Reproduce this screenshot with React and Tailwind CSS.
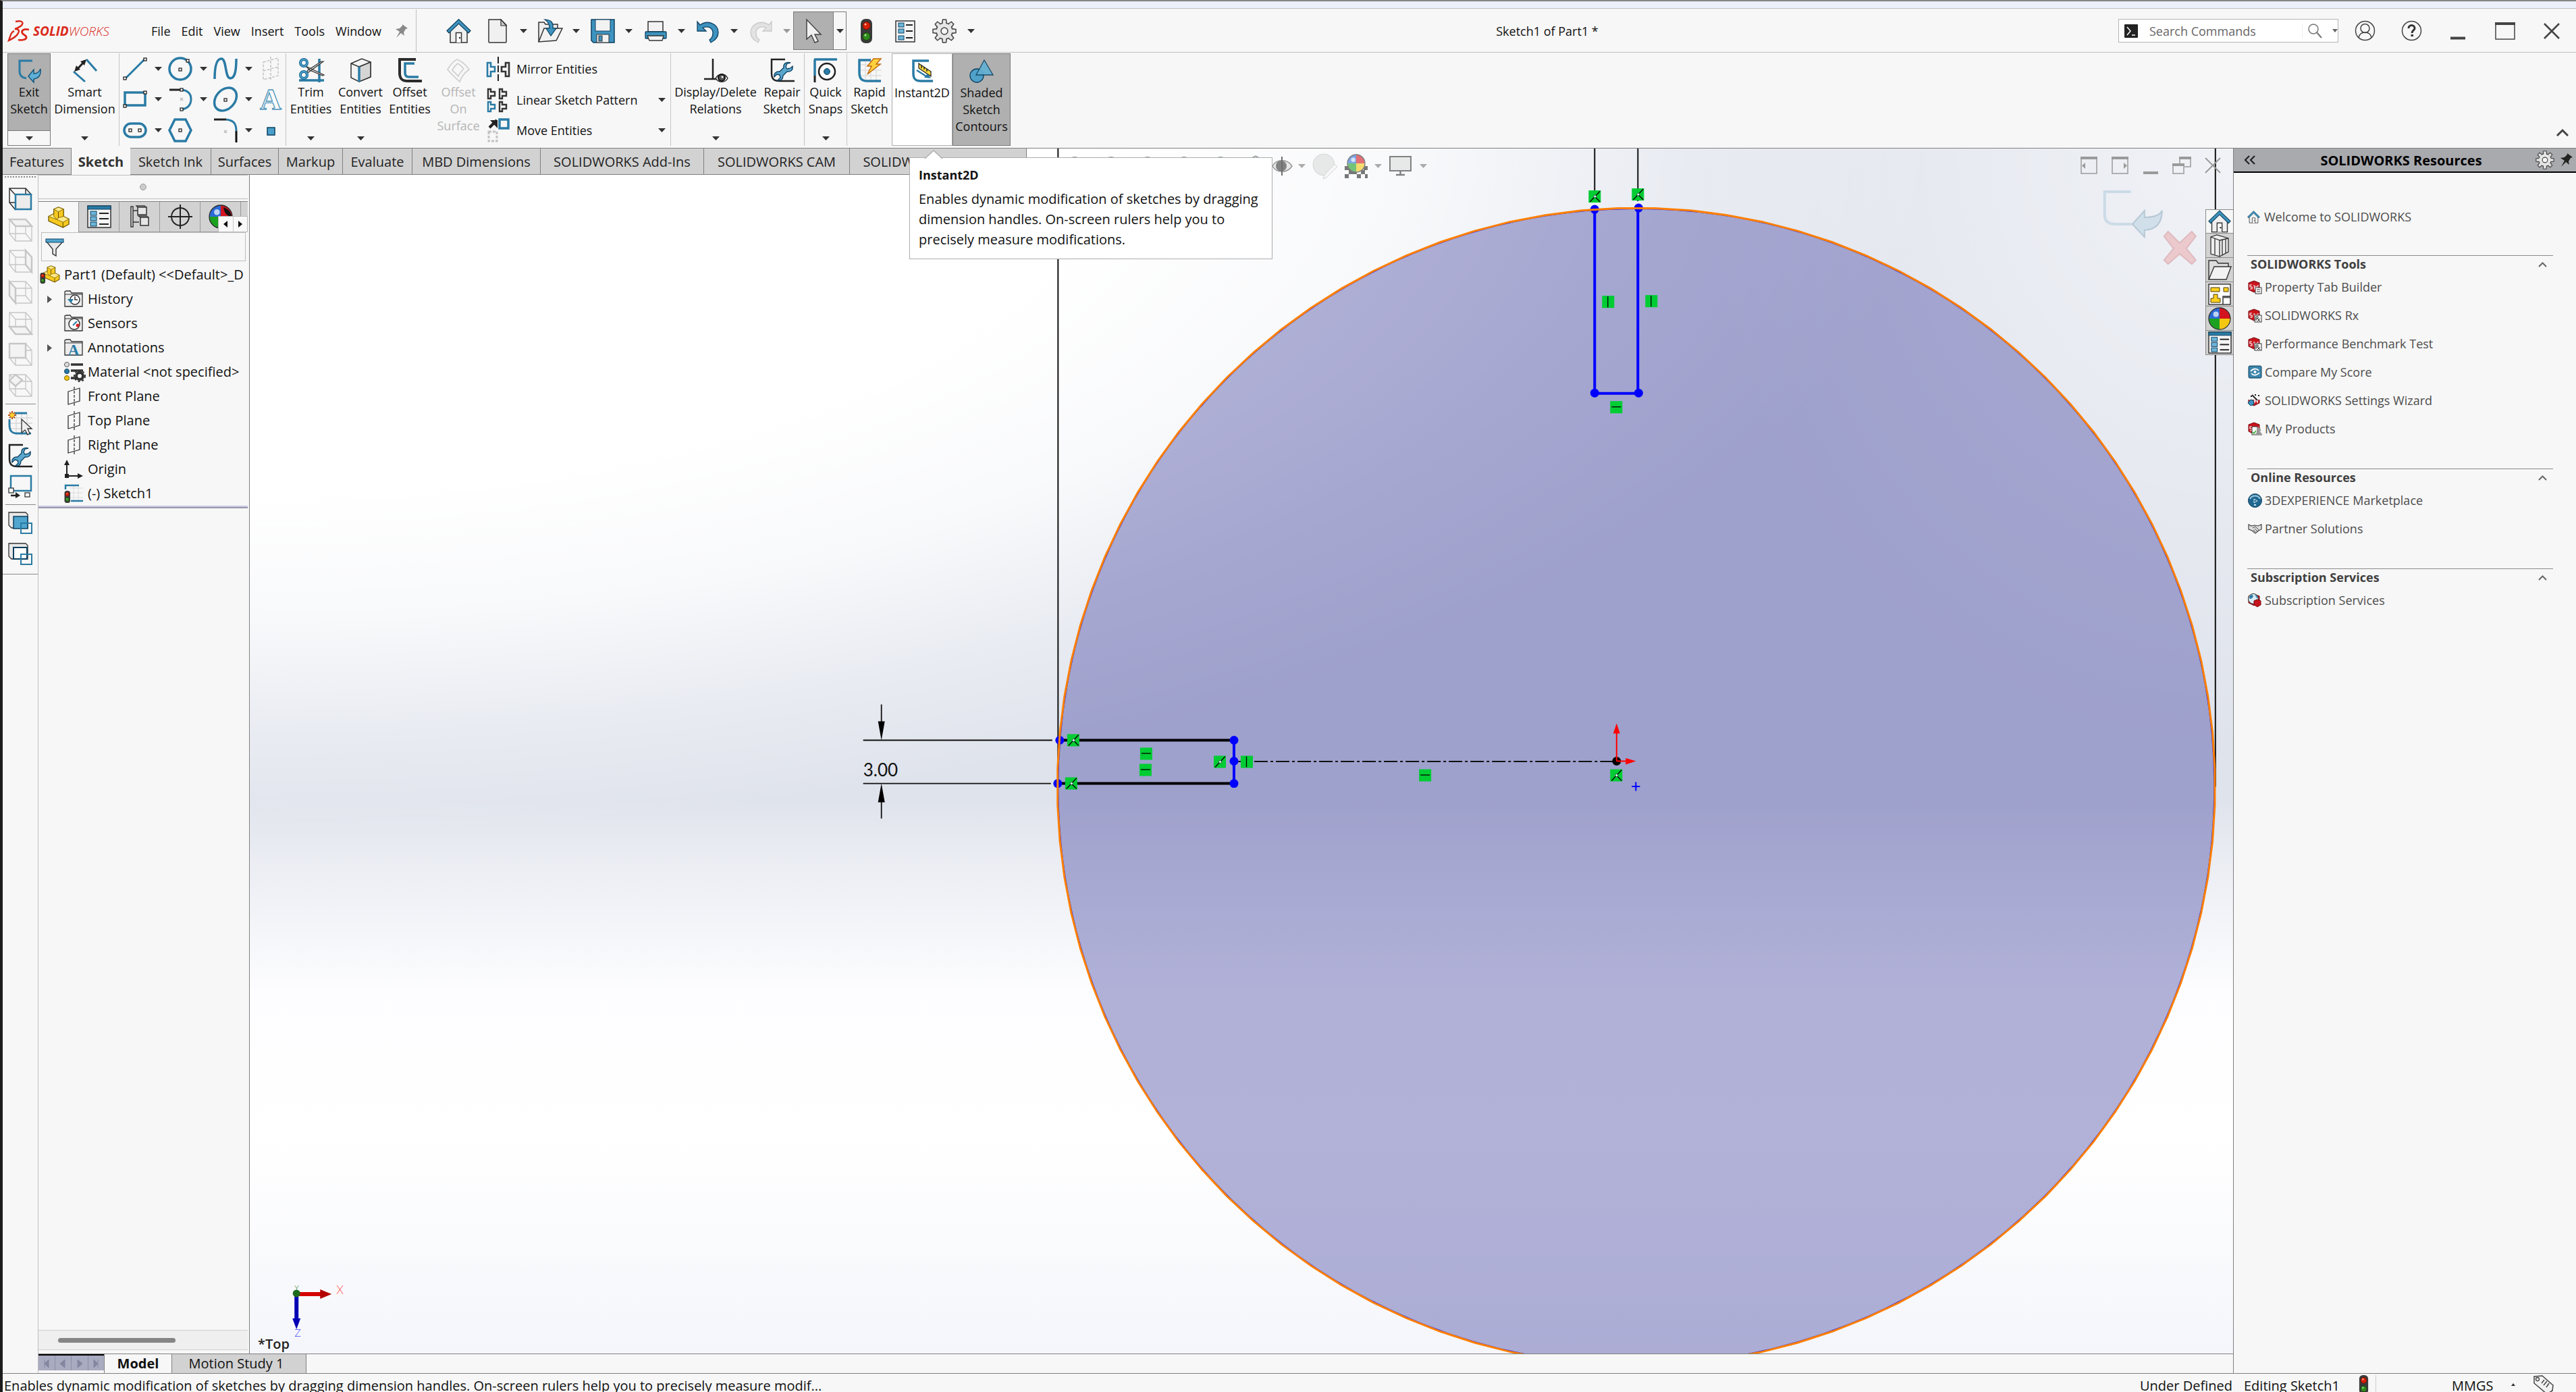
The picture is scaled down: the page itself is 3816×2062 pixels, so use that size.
const BLUE = "#2a7ba5";
const DARK = "#333333";

function Ico({ w = 36, h = 36, vw, vh, className = "", children }) {
  return (
    <svg
      width={w}
      height={h}
      viewBox={`0 0 ${vw || w} ${vh || h}`}
      fill="none"
      className={`shrink-0 overflow-visible ${className}`}
      aria-hidden="true"
    >
      {children}
    </svg>
  );
}

function Caret({ color = DARK }) {
  return (
    <Ico w={11} h={6}>
      <path d="M0 0h11L5.500 6z" fill={color} />
    </Ico>
  );
}

function Handle({ x, y }) {
  return <rect x={x - 2} y={y - 2} width="4" height="4" fill="#fff" stroke="#222" strokeWidth="1.300" />;
}

function TrafficShape() {
  return (
    <>
      <rect x="1" y="0" width="17" height="36" rx="7" fill="#3a3a3a" />
      <circle cx="9.500" cy="10" r="5.500" fill="#d81e05" stroke="#7a0e00" />
      <circle cx="8" cy="8" r="1.500" fill="#ffb3a5" />
      <circle cx="9.500" cy="26" r="5.500" fill="#2f8a1c" stroke="#134a08" />
      <circle cx="8" cy="24" r="1.500" fill="#a9e59b" />
    </>
  );
}

function HomeShape() {
  return (
    <>
      <path d="M6 17v18h25V17L18.500 5z" fill="#f0f0f0" stroke="#333" strokeWidth="1.500" />
      <path d="M14.500 35V20.500h8V35" fill="#fff" stroke="#333" strokeWidth="1.500" />
      <circle cx="20" cy="28" r="1.300" fill="#333" />
      <path d="M1 17.500L18.500 0.500L36 17.500l-3 3.500L18.500 7L4 21z" fill="#3f93bd" stroke="#0c3f5c" strokeWidth="1.200" />
    </>
  );
}

function GearShape({ fill = "#e6e6e6" }) {
  return (
    <>
      {[0, 45, 90, 135, 180, 225, 270, 315].map((a) => (
        <path key={a} d="M14.500 7l1-6h5l1 6" transform={`rotate(${a} 18 18)`} fill={fill} stroke="#444" strokeWidth="1.500" />
      ))}
      <circle cx="18" cy="18" r="12" fill={fill} stroke="#444" strokeWidth="1.500" />
      {[0, 45, 90, 135, 180, 225, 270, 315].map((a) => (
        <path key={a} d="M15.500 8l.5-3h4l.5 3z" transform={`rotate(${a} 18 18)`} fill={fill} />
      ))}
      <circle cx="18" cy="18" r="5" fill="#f7f7f7" stroke="#444" strokeWidth="1.500" />
    </>
  );
}

function WrenchShape() {
  return (
    <path
      d="M30 7l-5 1-2 5 2 3 5-1 3-3c1 6-3 9-8 8l-6 6c0 5-3 8-8 7l4-4-1-4-4-1-4 4c-1-5 3-9 8-8l6-6c-1-5 3-9 10-7z"
      fill="#5aa7ce"
      stroke="#0c4060"
      strokeWidth="1.300"
    />
  );
}

function PinShape({ fill }) {
  return <path d="M11 0l8 6-3 1-3 5 1 5-5-4-7 7 5-9-6-4 6-1 4-4z" fill={fill} />;
}

function SphereShape({ x = 18, y = 18, r = 17 }) {
  return (
    <>
      <circle cx={x} cy={y} r={r} fill="#2b6bd6" />
      <path d={`M${x} ${y}V${y - r}A${r} ${r} 0 0 1 ${x + r} ${y}z`} fill="#d3141f" />
      <path d={`M${x} ${y}H${x + r}A${r} ${r} 0 0 1 ${x} ${y + r}z`} fill="#f4c812" />
      <path d={`M${x} ${y}V${y + r}A${r} ${r} 0 0 1 ${x - r} ${y}z`} fill="#1da121" />
      <circle cx={x} cy={y} r={r} stroke="#2a2a2a" strokeWidth="1.300" />
      <circle cx={x - r / 3} cy={y - r / 2.5} r={r / 4} fill="#fff" opacity=".7" />
    </>
  );
}

function ListShape() {
  return (
    <>
      <rect x="1" y="1" width="34" height="32" fill="#f4f4f4" stroke="#333" strokeWidth="1.500" />
      <rect x="1" y="1" width="34" height="5" fill={BLUE} stroke="#0c4060" />
      {[9, 17, 25].map((y) => (
        <g key={y}>
          <rect x="5" y={y} width="9" height="6" fill="#6db6da" stroke="#0c4060" />
          <path d={`M18 ${y + 3}h14`} stroke="#222" strokeWidth="2" />
        </g>
      ))}
    </>
  );
}

function PartShape() {
  return (
    <>
      <path d="M1 15l8-4V4l7-3 8 3v11l8 4v8l-9 5L1 22z" fill="#f6c921" stroke="#6b5200" strokeWidth="1.300" />
      <path d="M9 4l7-3 8 3-8 4zM16 17l8-2 8 4-9 5-9-4zM1 15l8-4v4l5 5z" fill="#fce98c" stroke="#8a6c00" />
      <path d="M16 8v9M23 24v8" stroke="#6b5200" strokeWidth="1.200" />
    </>
  );
}

/* Ribbon icons, all on a 36 x 36 box */
const icons = {
  exit: (
    <>
      <path d="M23 3H4v16c0 6 3 9 10 10" stroke={BLUE} strokeWidth="3" />
      <path d="M17 26l8-10v6c5 0 8-2 10-7 1 9-3 14-10 15v5z" fill="#5fb0d6" stroke="#0c4f75" strokeWidth="1.300" />
    </>
  ),
  dim: (
    <>
      <path d="M20 2l15 17M1 20l17 15" stroke={BLUE} strokeWidth="3" />
      <path d="M5 18L18 4" stroke="#222" strokeWidth="3" />
      <path d="M2 20l3-9 6 6zM20 2l-3 9-6-6z" fill="#222" />
    </>
  ),
  line: (
    <>
      <path d="M3 33L32 4" stroke={BLUE} strokeWidth="3" />
      <Handle x={3} y={32} />
      <Handle x={33} y={4} />
    </>
  ),
  circle: (
    <>
      <circle cx="18" cy="18" r="16" stroke={BLUE} strokeWidth="3.500" />
      <Handle x={18} y={19} />
      <Handle x={29} y={6} />
    </>
  ),
  spline: <path d="M2 33C2 12 6 3 12 3c8 0 5 29 13 29 6 0 9-8 9-29" stroke={BLUE} strokeWidth="3.500" />,
  plane: <path d="M7 8l22-6v26L7 34zM18 0v36M7 21l22-6" stroke="#c4c4c4" strokeWidth="1.500" strokeDasharray="4 2" />,
  rect: (
    <>
      <rect x="3" y="8" width="30" height="19" stroke={BLUE} strokeWidth="3.500" />
      <Handle x={3} y={28} />
      <Handle x={33} y={8} />
    </>
  ),
  arc: (
    <>
      <path d="M2 4h18" stroke="#222" strokeWidth="3" />
      <path d="M20 4c9 1 14 6 14 14s-5 14-14 15" stroke={BLUE} strokeWidth="3" />
      <path d="M18 16l4 4m0-4l-4 4" stroke="#bbb" strokeWidth="1.500" />
      <Handle x={20} y={4} />
      <Handle x={20} y={33} />
    </>
  ),
  ellipse: (
    <>
      <ellipse cx="18" cy="18" rx="19" ry="14" transform="rotate(-48 18 18)" stroke={BLUE} strokeWidth="3.500" />
      <Handle x={18} y={19} />
    </>
  ),
  text: (
    <text x="18" y="33" textAnchor="middle" fontFamily="Liberation Serif, serif" fontSize="44" fontWeight="bold" fill="#fdfdfd" stroke="#4c94ba" strokeWidth="1.300">
      A
    </text>
  ),
  slot: (
    <>
      <rect x="2" y="8" width="32" height="20" rx="10" stroke={BLUE} strokeWidth="3.500" />
      <Handle x={11} y={18} />
      <Handle x={25} y={18} />
    </>
  ),
  hex: (
    <>
      <path d="M10 2h16l8 16-8 16H10L2 18z" stroke={BLUE} strokeWidth="3.500" />
      <Handle x={18} y={18} />
    </>
  ),
  fillet: (
    <>
      <path d="M1 2h18" stroke="#222" strokeWidth="3" />
      <path d="M19 2c11 1 15 6 15 17" stroke={BLUE} strokeWidth="3" />
      <path d="M34 19v17" stroke="#111" strokeWidth="3" />
      <path d="M16 18l4 4m0-4l-4 4" stroke="#bbb" strokeWidth="1.500" />
    </>
  ),
  point: <rect x="13" y="14" width="11" height="11" fill="#4aa0ca" stroke="#0c4060" strokeWidth="1.500" />,
  trim: (
    <>
      <path d="M30 1v35M0 33h37" stroke={BLUE} strokeWidth="3.500" />
      <path d="M10 12l27 13-2 1L16 18zM10 24L36 5l-3 0-20 13z" fill="#ddd" stroke="#333" strokeWidth="1.200" />
      <circle cx="7" cy="7" r="5" stroke="#12608c" strokeWidth="4" />
      <circle cx="7" cy="25" r="5" stroke="#12608c" strokeWidth="4" />
      <circle cx="7" cy="7" r="5" stroke="#4fa5ce" strokeWidth="2" />
      <circle cx="7" cy="25" r="5" stroke="#4fa5ce" strokeWidth="2" />
    </>
  ),
  convert: (
    <>
      <path d="M4 8L20 1l13 5v22L16 35 4 29z" fill="#f3f3f3" stroke="#333" strokeWidth="1.500" />
      <path d="M4 8l12 5 17-7" stroke="#333" strokeWidth="1.500" />
      <path d="M16 13l17-7v22l-17 7z" fill="#d5d5d5" stroke="#333" strokeWidth="1.500" />
      <path d="M16 13v22" stroke={BLUE} strokeWidth="3.500" />
    </>
  ),
  offset: (
    <>
      <path d="M27 2H3v20c0 9 4 12 12 12h21" stroke="#2b2b2b" strokeWidth="4" />
      <path d="M25 8H11v14c0 4 2 6 6 6h14" stroke={BLUE} strokeWidth="3.500" />
    </>
  ),
  surface: <path d="M16 2c8 3 13 8 18 15-6 4-11 9-14 18C12 28 6 22 2 17 5 12 9 5 16 2zM17 8c-4 3-6 6-8 10 4 4 6 6 9 9 2-5 5-8 8-11-3-4-5-6-9-8z" stroke="#cfcfcf" strokeWidth="1.700" />,
  mirror: (
    <>
      <path d="M18 0v36" stroke="#222" strokeWidth="2" strokeDasharray="10 3" />
      <path d="M2 9h5v6h6v7H7v7H2z" stroke={BLUE} strokeWidth="2.600" />
      <path d="M34 9h-5v6h-6v7h6v7h5z" stroke="#333" strokeWidth="2.600" />
    </>
  ),
  pattern: (
    <>
      <path d="M3 2h4v4h6v6H7v4H3zM20 2h4v4h6v6h-6v4h-4zM20 21h4v4h6v6h-6v4h-4z" stroke="#333" strokeWidth="2.400" />
      <path d="M3 21h4v4h6v6H7v4H3z" stroke={BLUE} strokeWidth="2.400" />
    </>
  ),
  move: (
    <>
      <path d="M5 14l11-11" stroke="#222" strokeWidth="4" />
      <path d="M6 3h11v12z" fill="#222" />
      <rect x="20" y="2" width="13" height="13" stroke={BLUE} strokeWidth="3.500" />
      <rect x="4" y="20" width="12" height="14" stroke="#c4c4c4" strokeWidth="3" strokeDasharray="4 2" />
    </>
  ),
  relations: (
    <>
      <path d="M14 1v30M1 31h20" stroke="#222" strokeWidth="2.500" />
      <path d="M18 30c5-8 14-8 18 0-4 7-13 7-18 0z" fill="#fff" stroke="#333" strokeWidth="1.500" />
      <circle cx="27" cy="29" r="5" fill="#555" stroke="#111" strokeWidth="2" />
      <circle cx="28" cy="28" r="1.500" fill="#fff" />
    </>
  ),
  repair: (
    <>
      <path d="M22 2H2v20c0 9 3 12 12 12h22" stroke="#222" strokeWidth="2.500" />
      <WrenchShape />
    </>
  ),
  snaps: (
    <>
      <path d="M1 2h34M2 2v24" stroke={BLUE} strokeWidth="3.500" />
      <path d="M2 26v10" stroke="#222" strokeWidth="3" />
      <circle cx="20" cy="20" r="12" fill="#fff" stroke="#222" strokeWidth="2.500" />
      <circle cx="20" cy="20" r="4.500" fill={BLUE} stroke="#0c4060" />
    </>
  ),
  rapid: (
    <>
      <path d="M4 10h32M4 18h32M4 26h32M12 4v32M20 4v32M28 4v32" stroke="#dedede" strokeWidth="1.300" />
      <path d="M20 3H3v18c0 9 3 13 12 13h20" stroke={BLUE} strokeWidth="3.500" />
      <path d="M24 1h11l-7 8h6L15 24l6-12h-6z" fill="#ffd23e" stroke="#c26a12" strokeWidth="1.500" />
    </>
  ),
  instant: (
    <>
      <path d="M28 3H5v19c0 8 3 11 11 11h18" stroke={BLUE} strokeWidth="3.500" />
      <path d="M13 7l18 12v7L13 14z" fill="#ffd93b" stroke="#222" strokeWidth="1.300" />
      <path d="M17 10v4m4-2v4m4-1v4" stroke="#222" strokeWidth="1.500" />
      <path d="M10 17l14 9" stroke={BLUE} strokeWidth="2.500" />
      <path d="M31 29l-10-1 5-6z" fill={BLUE} />
    </>
  ),
  shaded: (
    <>
      <circle cx="11" cy="25" r="10" fill="#4fa1c9" stroke="#0c4060" strokeWidth="1.300" />
      <path d="M22 2l13 22H10z" fill="#62b0d4" stroke="#0c4060" strokeWidth="1.300" opacity=".9" />
    </>
  ),
  home: <HomeShape />,
  doc: (
    <>
      <path d="M5 1h18l8 8v25a1 1 0 0 1-1 1H6a1 1 0 0 1-1-1z" fill="#f0f0f0" stroke="#333" strokeWidth="1.500" />
      <path d="M23 1v9h8z" fill="#ccc" stroke="#333" strokeWidth="1.200" />
    </>
  ),
  open: (
    <>
      <path d="M1 34V5h8l2 3h18v6" fill="#ededed" stroke="#333" strokeWidth="1.500" />
      <path d="M1 34l8-20h27l-9 18z" fill="#f2f2f2" stroke="#333" strokeWidth="1.500" />
      <path d="M10 1c10 0 13 5 12 13h5l-8 11-7-11h5c0-6-2-10-7-13z" fill="#3e93bf" stroke="#0c4060" strokeWidth="1.200" />
    </>
  ),
  save: (
    <>
      <path d="M1 1h34v34H4l-3-3z" fill="#3e93bf" stroke="#0c4060" strokeWidth="1.500" />
      <rect x="7" y="1" width="22" height="17" fill="#f2f2f2" stroke="#0c4060" />
      <rect x="9" y="23" width="18" height="12" fill="#f2f2f2" stroke="#333" />
      <rect x="12" y="25" width="5" height="8" fill="#3e93bf" stroke="#333" />
    </>
  ),
  print: (
    <>
      <rect x="7" y="4" width="22" height="15" fill="#f2f2f2" stroke="#333" strokeWidth="1.500" />
      <rect x="3" y="19" width="31" height="10" rx="1" fill="#3e93bf" stroke="#0c4060" strokeWidth="1.300" />
      <path d="M6 25h24l-2 7H9z" fill="#f2f2f2" stroke="#333" strokeWidth="1.300" />
    </>
  ),
  undo: <path d="M2 4v14h13l-5-5c8-3 15 0 15 8 0 4-2 8-5 10l2 4c6-3 11-8 11-15C33 7 17 1 6 9z" fill="#3e93bf" stroke="#0c4060" strokeWidth="1.300" />,
  redo: <path d="M34 4v14H21l5-5c-8-3-15 0-15 8 0 4 2 8 5 10l-2 4C8 32 3 27 3 20 3 7 19 1 30 9z" fill="#e2e2e2" stroke="#c9c9c9" strokeWidth="1.300" />,
  cursor: <path d="M8 1v29l7-6 5 11 5-2-5-10h9z" fill="#f0f0f0" stroke="#444" strokeWidth="1.500" />,
  gear: <GearShape />,
  props: (
    <>
      <rect x="4" y="3" width="28" height="31" fill="#f4f4f4" stroke="#333" strokeWidth="1.500" />
      {[6, 15, 25].map((y) => (
        <g key={y}>
          <rect x="8" y={y} width="8" height="6" fill="#6db6da" stroke="#0c4060" />
          <path d={`M19 ${y + 3}h10`} stroke="#222" strokeWidth="2" />
        </g>
      ))}
    </>
  ),
};

function Logo() {
  return (
    <div className="flex w-[212px] items-center gap-1 pl-2 text-[#da291c]">
      <Ico w={33} h={32} vw={33} vh={32}>
        <path d="M11 2c7-2 12 0 10 4-1 3-6 5-11 7 6 0 7 2 5 6-2 5-8 8-14 11 3-9 4-13 8-14" stroke="#da291c" strokeWidth="2.400" />
        <path d="M31 14c-7-2-12 1-10 5 1 3 7 3 6 7-1 3-7 4-12 3" stroke="#da291c" strokeWidth="2.800" />
      </Ico>
      <span className="text-[19px] leading-6 italic">
        <b>SOLID</b>
        <span className="font-light">WORKS</span>
      </span>
    </div>
  );
}

function QuickTool({ icon, off }) {
  return (
    <>
      <button className="flex w-[39px] justify-center">
        <Ico>{icons[icon]}</Ico>
      </button>
      <button className={off ? "flex w-[29px] justify-end pr-1" : "flex w-[39px] justify-center"}>
        <Caret color={off ? "#999" : DARK} />
      </button>
    </>
  );
}

function TitleBar() {
  return (
    <header className="flex h-[66px] shrink-0 items-center border-y border-[#bfbfbf] pt-px">
      <Logo />
      <nav className="flex w-[400px] items-center gap-4 pl-2 text-lg">
        {["File", "Edit", "View", "Insert", "Tools", "Window"].map((m) => (
          <button key={m}>{m}</button>
        ))}
        <Ico w={20} h={20} className="ml-1">
          <PinShape fill="#8a8a8a" />
        </Ico>
      </nav>
      <div className="flex h-full items-center border-l border-[#bfbfbf] pl-[44px]">
        <button className="mr-[20px]">
          <Ico>{icons.home}</Ico>
        </button>
        <QuickTool icon="doc" />
        <QuickTool icon="open" />
        <QuickTool icon="save" />
        <QuickTool icon="print" />
        <QuickTool icon="undo" />
        <QuickTool icon="redo" off />
        <div className="flex h-[57px] border border-[#7a7a7a]">
          <button className="flex w-[58px] items-center justify-center bg-[#b0b0b0]">
            <Ico>{icons.cursor}</Ico>
          </button>
          <button className="flex w-[19px] items-center justify-center border-l border-[#7a7a7a]">
            <Caret />
          </button>
        </div>
        <div className="flex w-[192px] items-center gap-[30px] pl-[20px]">
          <button>
            <Ico w={19} h={36}>
              <TrafficShape />
            </Ico>
          </button>
          <button>
            <Ico>{icons.props}</Ico>
          </button>
          <button className="-ml-2 flex items-center gap-4">
            <Ico>{icons.gear}</Ico>
            <Caret />
          </button>
        </div>
      </div>
      <h1 className="flex-1 text-center text-lg">Sketch1 of Part1 *</h1>
      <div className="flex items-center pr-[24px]">
        <div className="flex h-[35px] w-[326px] items-center border border-[#b5b5b5] bg-white pl-2">
          <Ico w={20} h={20}>
            <rect width="20" height="20" rx="1" fill="#222" />
            <path d="M4 4l5 6-5 6M11 16h5" stroke="#fff" strokeWidth="1.500" />
          </Ico>
          <input
            type="text"
            aria-label="Search Commands"
            placeholder="Search Commands"
            className="ml-[17px] w-[226px] text-lg outline-none placeholder:text-[#666]"
          />
          <button className="flex items-center gap-4 border-l border-[#eeeeee] pl-2">
            <Ico w={20} h={22}>
              <circle cx="8" cy="8" r="7" stroke="#777" strokeWidth="1.500" />
              <path d="M13 13l7 8" stroke="#777" strokeWidth="2" />
            </Ico>
            <Ico w={8} h={5}>
              <path d="M0 0h8L4 5z" fill="#666" />
            </Ico>
          </button>
        </div>
        <button className="ml-[24px]">
          <Ico w={31} h={31}>
            <circle cx="15.500" cy="15.500" r="14" stroke="#444" strokeWidth="1.500" />
            <circle cx="15.500" cy="12" r="6.500" stroke="#444" strokeWidth="1.500" />
            <path d="M6 26c1-6 5-8 9.500-8s8.500 2 9.500 8" stroke="#444" strokeWidth="1.500" />
          </Ico>
        </button>
        <button className="ml-[38px]">
          <Ico w={31} h={31}>
            <circle cx="15.500" cy="15.500" r="14" stroke="#444" strokeWidth="1.500" />
            <path d="M11 12c0-6 9-6 9 0 0 3-4 3-4 7" stroke="#333" strokeWidth="3" />
            <rect x="14.500" y="21" width="3.500" height="3" fill="#333" />
          </Ico>
        </button>
        <button className="ml-[42px]">
          <Ico w={22} h={26}>
            <path d="M0 23.500h22" stroke="#444" strokeWidth="4" />
          </Ico>
        </button>
        <button className="ml-[44px]">
          <Ico w={30} h={26}>
            <rect x="1" y="1" width="28" height="24" stroke="#444" strokeWidth="1.500" />
            <path d="M0 2h30" stroke="#444" strokeWidth="4" />
          </Ico>
        </button>
        <button className="ml-[42px]">
          <Ico w={24} h={24}>
            <path d="M1 1l22 22M23 1L1 23" stroke="#444" strokeWidth="2.500" />
          </Ico>
        </button>
      </div>
    </header>
  );
}

function BigButton({ icon, lines, width, drop, off, className = "" }) {
  return (
    <button className={`flex h-[137px] flex-col items-center pt-[7px] text-lg leading-[25px] ${width} ${off ? "text-[#b5b5b5]" : ""} ${className}`}>
      <Ico>{icons[icon]}</Ico>
      <span className="mt-[2px] flex flex-col whitespace-nowrap">
        {lines.map((l) => (
          <span key={l}>{l}</span>
        ))}
      </span>
      {drop && (
        <span className="mt-auto flex h-[22px] items-center">
          <Caret />
        </span>
      )}
    </button>
  );
}

function Sep() {
  return <div className="h-[137px] w-px shrink-0 bg-[#c4c4c4]" />;
}

const sketchTools = [
  ["line", true], ["circle", true], ["spline", true], ["plane", false],
  ["rect", true], ["arc", true], ["ellipse", true], ["text", false],
  ["slot", true], ["hex", false], ["fillet", true], ["point", false],
];

const listTools = [
  ["mirror", "Mirror Entities", false],
  ["pattern", "Linear Sketch Pattern", true],
  ["move", "Move Entities", true],
];

function Ribbon() {
  return (
    <div className="flex h-[142px] shrink-0 items-start border-b border-[#808080] pt-px pl-[7px]">
      <div className="flex h-[137px] w-[64px] flex-col border border-[#7a7a7a] bg-[#b0b0b0]">
        <button className="flex flex-1 flex-col items-center pt-[7px] text-lg leading-[25px]">
          <Ico>{icons.exit}</Ico>
          <span className="mt-px">Exit</span>
          <span>Sketch</span>
        </button>
        <button className="flex h-[22px] items-center justify-center border-t border-[#7a7a7a] bg-[#f7f7f7]">
          <Caret />
        </button>
      </div>
      <BigButton icon="dim" lines={["Smart", "Dimension"]} width="w-[101px]" drop />
      <Sep />
      <div className="grid h-[137px] grid-cols-[67px_67px_67px_40px] grid-rows-3 pl-[5px]">
        {sketchTools.map(([name, drop]) => (
          <div key={name} className="flex items-center">
            <button>
              <Ico>{icons[name]}</Ico>
            </button>
            {drop && (
              <button className="ml-[11px]">
                <Caret />
              </button>
            )}
          </div>
        ))}
      </div>
      <Sep />
      <BigButton icon="trim" lines={["Trim", "Entities"]} width="w-[73px]" drop />
      <BigButton icon="convert" lines={["Convert", "Entities"]} width="w-[74px]" drop />
      <BigButton icon="offset" lines={["Offset", "Entities"]} width="w-[72px]" />
      <BigButton icon="surface" lines={["Offset", "On", "Surface"]} width="w-[72px]" off />
      <div className="flex h-[137px] w-[278px] flex-col pr-[7px] pl-[5px] text-lg">
        {listTools.map(([name, label, drop]) => (
          <div key={name} className="flex flex-1 items-center justify-between">
            <button className="flex items-center gap-[9px]">
              <Ico>{icons[name]}</Ico>
              {label}
            </button>
            {drop && (
              <button>
                <Caret />
              </button>
            )}
          </div>
        ))}
      </div>
      <Sep />
      <BigButton icon="relations" lines={["Display/Delete", "Relations"]} width="w-[132px]" drop />
      <BigButton icon="repair" lines={["Repair", "Sketch"]} width="w-[65px]" />
      <Sep />
      <BigButton icon="snaps" lines={["Quick", "Snaps"]} width="w-[62px]" drop />
      <Sep />
      <BigButton icon="rapid" lines={["Rapid", "Sketch"]} width="w-[66px]" />
      <BigButton icon="instant" lines={["Instant2D"]} width="w-[90px]" className="border border-[#adadad] bg-white" />
      <BigButton icon="shaded" lines={["Shaded", "Sketch", "Contours"]} width="w-[86px]" className="border border-[#7a7a7a] bg-[#b0b0b0]" />
      <button className="mt-auto mr-[11px] mb-[17px] ml-auto">
        <Ico w={18} h={11}>
          <path d="M1 10l8-8 8 8" stroke="#444" strokeWidth="3" />
        </Ico>
      </button>
    </div>
  );
}

const tabs = [
  ["Features", "w-[102px]"],
  ["Sketch", "w-[87px]"],
  ["Sketch Ink", "w-[120px]"],
  ["Surfaces", "w-[100px]"],
  ["Markup", "w-[95px]"],
  ["Evaluate", "w-[103px]"],
  ["MBD Dimensions", "w-[190px]"],
  ["SOLIDWORKS Add-Ins", "w-[242px]"],
  ["SOLIDWORKS CAM", "w-[216px]"],
  ["SOLIDWORKS CAM TBM", "w-[262px]"],
];

function CommandTabs() {
  return (
    <nav className="absolute -top-px left-0 z-10 flex h-[40px] text-xl text-[#222]">
      {tabs.map(([name, width]) => (
        <button
          key={name}
          className={
            name === "Sketch"
              ? `${width} bg-[#f7f7f7] pt-[2px] font-bold text-[#333]`
              : `${width} border-y border-r border-[#808080] bg-[#d2d2d2] pt-[2px] whitespace-nowrap`
          }
        >
          {name}
        </button>
      ))}
    </nav>
  );
}

function ViewCube({ face }) {
  return (
    <Ico w={34} h={34}>
      <path d="M1 1h24v21H1zM10 11h24v22H10zM1 1l9 10M25 1l9 10M1 22l9 11M25 22l9 11" stroke="#c6c6c6" strokeWidth="1.300" />
      <path d={face} fill="#f3f3f3" stroke="#c6c6c6" strokeWidth="2.400" />
    </Ico>
  );
}

const cubeFaces = [
  "M1 1h24l9 10H10z",
  "M25 1l9 10v22l-9-11z",
  "M1 1l9 10v22l-9-11z",
  "M1 22h24l9 11H10z",
  "M1 1h24v21H1z",
  "M1 10L10 1l10 8-10 9z",
];

function SideTools() {
  return (
    <aside className="flex w-[53px] shrink-0 flex-col items-center gap-3 border-r border-[#bdbdbd] pt-[41px]">
      <div className="mb-[3px] h-0 w-[46px] border-t-2 border-dotted border-[#888]" />
      <Ico w={34} h={34}>
        <path d="M1 1h24v21H1zM1 1l9 10M25 1l9 10M1 22l9 11" stroke="#333" strokeWidth="1.500" />
        <rect x="10" y="10" width="23" height="22" fill="#ececec" stroke={BLUE} strokeWidth="2.500" />
      </Ico>
      {cubeFaces.map((f) => (
        <ViewCube key={f} face={f} />
      ))}
      <div className="-my-[2px] h-px w-[45px] bg-[#8a8a8a]" />
      <Ico w={36} h={36}>
        <path d="M4 10h32M4 18h32M4 26h32M12 4v32M20 4v32M28 4v32" stroke="#d8d8d8" strokeWidth="1.300" />
        <path d="M10 3h18M2 12v8c0 9 3 13 12 13h20" stroke={BLUE} strokeWidth="3" />
        <path d="M6 0v12M0 6h12M2 2l8 8M10 2l-8 8" stroke="#b0520c" strokeWidth="2" />
        <circle cx="6" cy="6" r="3" fill="#ffcf2e" />
        <path d="M20 12v20l5-4 4 7 3-2-3-7h6z" fill="#eee" stroke="#333" strokeWidth="1.300" />
      </Ico>
      <Ico w={36} h={34}>{icons.repair}</Ico>
      <Ico w={36} h={34}>
        <rect x="4" y="2" width="30" height="22" stroke={BLUE} strokeWidth="2.500" />
        <rect x="1" y="20" width="7" height="7" fill="#fff" stroke="#333" strokeWidth="1.300" />
        <rect x="25" y="27" width="7" height="6" fill="#fff" stroke="#333" strokeWidth="1.300" />
        <path d="M4 31h9" stroke="#222" strokeWidth="2.500" />
        <path d="M11 26l7 5-7 4z" fill="#222" />
      </Ico>
      <div className="-my-[2px] h-px w-[45px] bg-[#8a8a8a]" />
      <Ico w={36} h={34}>
        <path d="M1 1h25l3 3v20H5l-4-4z" fill="#e8e8e8" stroke="#333" strokeWidth="1.300" />
        <rect x="8" y="7" width="21" height="18" fill="#4fa5ce" stroke="#0c4060" strokeWidth="1.500" />
        <rect x="19" y="17" width="16" height="15" stroke={BLUE} strokeWidth="2" />
      </Ico>
      <Ico w={36} h={34}>
        <path d="M1 1h25l3 3v20H5l-4-4z" fill="#e8e8e8" stroke="#333" strokeWidth="1.300" />
        <rect x="8" y="7" width="20" height="17" fill="#fff" stroke="#0c4060" strokeWidth="2" />
        <rect x="19" y="17" width="16" height="15" stroke={BLUE} strokeWidth="2" />
      </Ico>
      <div className="h-px w-full bg-[#8a8a8a]" />
    </aside>
  );
}

function Folder({ children }) {
  return (
    <Ico w={28} h={26}>
      <path d="M1 24V2l2-1h6l2 3h16v20z" fill="#ececec" stroke="#333" strokeWidth="1.300" />
      <path d="M1 6h26" stroke="#333" />
      {children}
    </Ico>
  );
}

function PlaneIcon() {
  return (
    <Ico w={28} h={28}>
      <path d="M6 7l17-5v19L6 26z" stroke="#333" strokeWidth="1.300" />
      <path d="M15 0v28" stroke="#333" strokeWidth="1.300" strokeDasharray="4 2" />
    </Ico>
  );
}

const tree = [
  {
    label: "History",
    expand: true,
    icon: (
      <Folder>
        <circle cx="16" cy="14" r="7" fill="#fff" stroke="#333" strokeWidth="1.500" />
        <path d="M16 9v5h4" stroke="#333" strokeWidth="1.500" />
        <path d="M5 13h9l-4 6z" fill={BLUE} />
      </Folder>
    ),
  },
  {
    label: "Sensors",
    icon: (
      <Folder>
        <circle cx="15" cy="14" r="8" fill="#fff" stroke="#333" strokeWidth="1.500" />
        <path d="M13 16l6-6" stroke={BLUE} strokeWidth="2" />
        <circle cx="20" cy="16" r="2.500" fill="#d22" />
      </Folder>
    ),
  },
  {
    label: "Annotations",
    expand: true,
    icon: (
      <Folder>
        <text x="14" y="24" textAnchor="middle" fontFamily="Liberation Serif, serif" fontSize="23" fontWeight="bold" fill={BLUE}>
          A
        </text>
      </Folder>
    ),
  },
  {
    label: "Material <not specified>",
    icon: (
      <Ico w={30} h={30}>
        <circle cx="4" cy="4" r="3.500" fill="#ddd" stroke="#555" />
        <circle cx="4" cy="14" r="3.500" fill={BLUE} stroke="#0c4060" />
        <circle cx="4" cy="24" r="3.500" fill="#f4c812" stroke="#7a6000" />
        <path d="M10 4h18M10 13h18M10 24h8" stroke="#333" strokeWidth="3.500" />
        <circle cx="23" cy="21" r="5" stroke="#333" strokeWidth="4" />
        <circle cx="23" cy="21" r="8" stroke="#333" strokeWidth="2" strokeDasharray="3 3" />
      </Ico>
    ),
  },
  { label: "Front Plane", icon: <PlaneIcon /> },
  { label: "Top Plane", icon: <PlaneIcon /> },
  { label: "Right Plane", icon: <PlaneIcon /> },
  {
    label: "Origin",
    icon: (
      <Ico w={28} h={28}>
        <path d="M4 24V5M4 24h18" stroke="#222" strokeWidth="2" />
        <path d="M0 8l4-8 4 8zM20 20l8 4-8 4z" fill="#222" />
        <rect x="1" y="21" width="6" height="6" fill="#222" />
      </Ico>
    ),
  },
  {
    label: "(-) Sketch1",
    icon: (
      <Ico w={28} h={28}>
        <path d="M8 6h20M8 13h20M8 20h20M14 1v26M21 1v26" stroke="#dcdcdc" />
        <path d="M2 8V2h20M10 25h18" stroke={BLUE} strokeWidth="2.500" />
        <g transform="translate(0 10) scale(.5)">
          <TrafficShape />
        </g>
      </Ico>
    ),
  },
];

function FeatureTree() {
  const tab = "flex w-[60px] shrink-0 items-center justify-center border-r border-b border-[#9a9a9a] bg-[#d2d2d2]";
  return (
    <section className="flex w-[313px] shrink-0 flex-col border-r border-[#808080] pt-[39px] pr-[2px]">
      <div className="flex h-[36px] items-center justify-center border-t border-b border-[#bdbdbd]">
        <Ico w={10} h={10}>
          <circle cx="5" cy="5" r="4.500" fill="#ccc" stroke="#999" />
        </Ico>
      </div>
      <div className="relative mt-[3px] flex h-[46px] shrink-0 overflow-hidden border-t border-[#808080]">
        <button className="flex w-[60px] shrink-0 items-center justify-center border-r border-[#9a9a9a]">
          <Ico w={32} h={32} vw={33} vh={33}>
            <PartShape />
          </Ico>
        </button>
        <button className={tab}>
          <Ico w={36} h={34}>
            <ListShape />
          </Ico>
        </button>
        <button className={tab}>
          <Ico w={30} h={34}>
            <path d="M2 2h3v30H2zM5 8h8M5 25h9" fill="#eee" stroke="#333" strokeWidth="1.500" />
            <path d="M12 3h13v11H12zM16 18h12v12H16z" fill="#e6e6e6" stroke="#333" strokeWidth="1.500" />
            <path d="M12 3l-2-2h12l3 2M16 18l-3-2h12l3 2" stroke="#333" strokeWidth="1.300" />
          </Ico>
        </button>
        <button className={tab}>
          <Ico w={36} h={36}>
            <circle cx="18" cy="18" r="13" stroke="#222" strokeWidth="2" />
            <path d="M18 0v36M0 18h36" stroke="#222" strokeWidth="2" />
          </Ico>
        </button>
        <button className={tab}>
          <Ico w={36} h={36}>
            <SphereShape />
            <path d="M22 4c8 3 11 7 12 14-7-1-11-6-12-14z" fill="#111" />
          </Ico>
        </button>
        <div className="flex-1 border-b border-[#9a9a9a] bg-[#d2d2d2]" />
        <div className="absolute right-0 bottom-0 flex h-[24px] w-[44px] border border-[#bbb] bg-[#f9f9f9]">
          <button className="flex flex-1 items-center justify-center border-r border-[#ccc]">
            <Ico w={6} h={10}>
              <path d="M6 0v10L0 5z" fill="#111" />
            </Ico>
          </button>
          <button className="flex flex-1 items-center justify-center">
            <Ico w={6} h={10}>
              <path d="M0 0v10l6-5z" fill="#111" />
            </Ico>
          </button>
        </div>
      </div>
      <div className="mr-[3px] ml-1 flex h-[43px] items-center border border-[#bdbdbd] pl-[5px]">
        <Ico w={28} h={26}>
          <path d="M2 5h24L16 16v10l-5-3v-7z" fill="#e8e8e8" stroke="#333" strokeWidth="1.400" />
          <rect x="1" y="1" width="26" height="5" fill="#4fa5ce" stroke="#0c4060" />
        </Ico>
      </div>
      <ul className="mt-[2px] text-xl whitespace-nowrap">
        <li className="flex h-[36px] items-center pl-[2px]">
          <Ico w={30} h={28} className="mr-[6px]">
            <g transform="translate(4 0) scale(.78)">
              <PartShape />
            </g>
            <g transform="translate(0 11) scale(.45)">
              <TrafficShape />
            </g>
          </Ico>
          Part1 (Default) &lt;&lt;Default&gt;_D
        </li>
        {tree.map((t) => (
          <li key={t.label} className="flex h-[36px] items-center pl-[13px]">
            <span className="w-[25px] shrink-0">
              {t.expand && (
                <Ico w={7} h={11}>
                  <path d="M0 0l7 5.500L0 11z" fill="#555" />
                </Ico>
              )}
            </span>
            <span className="flex w-[35px] shrink-0 items-center">{t.icon}</span>
            {t.label}
          </li>
        ))}
      </ul>
      <div className="h-[4px] shrink-0 border-b-2 border-[#9a98b0] bg-[#cbcbe2]" />
      <div className="mt-auto mb-[5px] flex h-[30px] items-center border-t border-b border-[#d0d0d0] bg-[#efefef] pl-[29px]">
        <div className="h-[7px] w-[174px] rounded bg-[#868686]" />
      </div>
    </section>
  );
}

/* Green sketch relation tags */
function Rel({ x, y, kind }) {
  return (
    <g transform={`translate(${x} ${y})`}>
      <rect width="18" height="18" fill="#00cc33" />
      {kind === "h" && <path d="M2 8.500h14" stroke="#000" strokeWidth="1.300" />}
      {kind === "v" && <path d="M8.500 1v16" stroke="#000" strokeWidth="1.300" />}
      {(kind === "c" || kind === "m") && <path d="M2 17L17 1" stroke="#000" strokeWidth="1.300" />}
      {kind === "c" && <path d="M9 9l8 8" stroke="#000" strokeWidth="1.300" />}
      {(kind === "c" || kind === "m") && <circle cx="9.500" cy="9" r="2" fill="#cfe" stroke="#333" strokeWidth=".8" />}
    </g>
  );
}

const CX = 2423.5;
const CY = 1166;
const R = 857;
const SIDES = 100;
const outline = Array.from({ length: SIDES }, (_, i) => {
  const a = ((i + 0.5) / SIDES) * Math.PI * 2;
  return `${(CX + R * Math.sin(a)).toFixed(1)},${(CY - R * Math.cos(a)).toFixed(1)}`;
}).join(" ");

function SketchCanvas() {
  return (
    <svg viewBox="370 221 2938 1784" preserveAspectRatio="xMidYMid slice" className="block h-full w-full">
      <circle cx={CX} cy={CY} r={R - 1} fill="rgba(57,57,155,.39)" stroke="#1414ff" strokeWidth="2" />
      <path d="M1567.500 221v905M3281 221v945M2362 221v62M2426 221v78" stroke="#111" strokeWidth="2" />
      <path d="M1279 1097h280M1279 1161h278M1306 1044v30M1306 1213v-30" stroke="#111" strokeWidth="1.800" />
      <path d="M1301 1069h10l-5 28zM1301 1189h10l-5-28z" fill="#000" />
      <text x="1279" y="1150" fontFamily="Lato, sans-serif" fontSize="26" fill="#111">
        3.00
      </text>
      <path d="M1570 1097h258M1567 1161h261" stroke="#000" strokeWidth="4" />
      <path d="M2390 1128.500H1834" stroke="#111" strokeWidth="2" strokeDasharray="20 4 4 4" />
      <path d="M1828 1097v64M2362 311v272.500h64V309" stroke="#0000ff" strokeWidth="4" fill="none" />
      {[[1828, 1097], [1828, 1128], [1828, 1161], [1570, 1097], [1567, 1161], [2362, 311], [2427, 309], [2362, 583], [2427, 583]].map(([x, y]) => (
        <circle key={`${x}-${y}`} cx={x} cy={y} r="6.500" fill="#0000ff" />
      ))}
      <polygon points={outline} fill="none" stroke="#ff7f00" strokeWidth="3" />
      <Rel x={2353} y={283} kind="c" />
      <Rel x={2417} y={280} kind="c" />
      <Rel x={2373} y={439} kind="v" />
      <Rel x={2437} y={438} kind="v" />
      <Rel x={2385} y={595} kind="h" />
      <Rel x={1581} y={1088} kind="c" />
      <Rel x={1578} y={1152} kind="c" />
      <Rel x={1689} y={1108} kind="h" />
      <Rel x={1688} y={1132} kind="h" />
      <Rel x={1798} y={1120} kind="m" />
      <Rel x={1838} y={1120} kind="v" />
      <Rel x={2102} y={1140} kind="h" />
      <Rel x={2385} y={1140} kind="c" />
      <circle cx="2394.500" cy="1128" r="6.500" fill="#000" />
      <path d="M2394.500 1128v-42M2394.500 1128h16" stroke="#f00" strokeWidth="2" />
      <path d="M2389.500 1087l5-15 5 15zM2408 1123.500l15 4.500-15 5z" fill="#f00" />
      <path d="M2423 1159v13M2417 1165.500h12" stroke="#0000ff" strokeWidth="2" />
      {/* Orientation triad */}
      <path d="M442 1917h36" stroke="#d40000" strokeWidth="6" />
      <path d="M475 1910l17 7-17 7z" fill="#b40000" />
      <path d="M440 1917v40" stroke="#0000b4" strokeWidth="6" />
      <path d="M434 1953h12l-6 16z" fill="#0000b4" />
      <circle cx="440" cy="1916" r="5.500" fill="#1d6b1d" />
      <g fontFamily="Lato, sans-serif" fontWeight="300">
        <text x="499" y="1917" fontSize="17" fill="#ff5050">X</text>
        <text x="437" y="1912" fontSize="11" fill="#1d7a1d">Y</text>
        <text x="437" y="1980" fontSize="16" fill="#4646ff">Z</text>
      </g>
      {/* Confirmation corner */}
      <g opacity=".8">
        <path d="M3156 285h-39v34c0 10 6 14 16 14h24" stroke="#c3d7e4" strokeWidth="4" fill="none" />
        <path d="M3158 333l18-20v10c12 0 22-2 26-10 0 18-8 28-26 29v10z" fill="#c9dce8" stroke="#a9bfcd" strokeWidth="2" />
        <path d="M3211 344l17 17 18-17 6 7-14 18 14 17-6 6-18-15-17 15-6-6 14-17-14-18z" fill="#ebc0c3" stroke="#dcaeb2" strokeWidth="2" />
      </g>
    </svg>
  );
}

function ViewToolbar() {
  return (
    <div className="absolute top-[7px] left-[1208px] flex items-center opacity-60">
      <div className="flex w-[307px] items-center gap-[22px]">
        {[0, 1, 2, 3, 4].map((i) => (
          <Ico key={i} w={32} h={32}>
            <circle cx="14" cy="14" r="11" stroke="#555" strokeWidth="2" />
            <path d="M22 22l8 8" stroke="#555" strokeWidth="3" />
          </Ico>
        ))}
        <Ico w={28} h={32} className="-ml-1">
          <path d="M2 8l14-7 11 6v18l-13 6-12-6z" fill="#bfe0f0" stroke="#555" strokeWidth="1.500" />
        </Ico>
      </div>
      <button>
        <Ico w={30} h={32}>
          <path d="M0 16C6 5 22 5 29 16 22 27 6 27 0 16z" fill="#ddd" stroke="#555" strokeWidth="1.500" />
          <circle cx="13" cy="16" r="8" fill="#333" />
          <path d="M14 2v28" stroke="#111" strokeWidth="2" />
        </Ico>
      </button>
      <button className="ml-[8px]">
        <Caret color="#777" />
      </button>
      <button className="ml-[10px]">
        <Ico w={38} h={38}>
          <circle cx="17" cy="17" r="16" fill="#dcdcdc" stroke="#c0c0c0" />
          <path d="M33 16l4 4-16 16-5 2 2-6z" fill="#f4f4f4" stroke="#bbb" />
        </Ico>
      </button>
      <button className="ml-[9px]">
        <Ico w={36} h={36}>
          <path d="M1 16h34v20H1z" fill="#fff" />
          <path d="M1 18h6v6H1zM13 24h6v6h-6zM1 30h6v6H1zM7 24h6v6H7zM19 30h6v6h-6zM25 24h6v6h-6zM29 18h6v6h-6zM31 30h4v6h-4zM7 18h6v6H7z" fill="#222" />
          <SphereShape x={18} y={14} r={13} />
        </Ico>
      </button>
      <button className="ml-[9px]">
        <Caret color="#777" />
      </button>
      <button className="ml-[11px]">
        <Ico w={33} h={30}>
          <rect x="1" y="1" width="31" height="21" fill="#ddd" stroke="#333" strokeWidth="2" />
          <path d="M16.500 22v6M10 28h13" stroke="#333" strokeWidth="2.500" />
        </Ico>
      </button>
      <button className="ml-[12px]">
        <Caret color="#777" />
      </button>
    </div>
  );
}

function WindowButtons() {
  return (
    <div className="absolute top-[12px] right-[18px] flex items-center text-[#9a9a9a]">
      <Ico w={25} h={26}>
        <rect x="1" y="1" width="23" height="24" stroke="currentColor" strokeWidth="1.500" />
        <path d="M0 2h25" stroke="currentColor" strokeWidth="4" />
        <path d="M7 9v9l-5-4.500z" fill="currentColor" />
      </Ico>
      <Ico w={25} h={26} className="ml-[21px]">
        <rect x="1" y="1" width="23" height="24" stroke="currentColor" strokeWidth="1.500" />
        <path d="M0 2h25" stroke="currentColor" strokeWidth="4" />
        <path d="M18 9v9l5-4.500z" fill="currentColor" />
      </Ico>
      <Ico w={22} h={26} className="ml-[22px]">
        <path d="M0 24h22" stroke="currentColor" strokeWidth="4" />
      </Ico>
      <Ico w={28} h={26} className="ml-[21px]">
        <path d="M11 10V1h16v14h-9M1 11h16v14H1z" stroke="currentColor" strokeWidth="1.500" />
        <path d="M10 2h18M0 12h18" stroke="currentColor" strokeWidth="4" />
      </Ico>
      <Ico w={24} h={24} className="ml-[20px]">
        <path d="M1 1l22 22M23 1L1 23" stroke="currentColor" strokeWidth="2" />
      </Ico>
    </div>
  );
}

function TaskTabs() {
  const cell = "flex h-[36px] w-full items-center justify-center border-b border-l border-[#8a8a8a] bg-[#d2d2d2]";
  return (
    <div className="absolute top-[90px] right-0 w-[41px]">
      <button className="flex h-[36px] w-full items-center justify-center border-y border-l border-[#8a8a8a] bg-[#f7f7f7]">
        <Ico w={34} h={34} vw={37} vh={36}>
          <HomeShape />
        </Ico>
      </button>
      <button className={cell}>
        <Ico w={30} h={34}>
          <path d="M2 4l9-3 17 5v20l-13 7-13-4z" fill="#eee" stroke="#333" strokeWidth="1.300" />
          <path d="M2 4l13 5v24M8 6v24M15 9l13-3M19 8v23M24 7v21" stroke="#333" strokeWidth="1.300" />
        </Ico>
      </button>
      <button className={cell}>
        <Ico w={36} h={32}>
          <path d="M2 30V2h11l3 4h15v5" fill="#ddd" stroke="#333" strokeWidth="1.400" />
          <path d="M2 30l8-19h25l-7 19z" fill="#f2f2f2" stroke="#333" strokeWidth="1.400" />
        </Ico>
      </button>
      <button className={cell}>
        <Ico w={34} h={32}>
          <rect x="1" y="1" width="32" height="30" fill="#fff" stroke="#333" strokeWidth="1.400" />
          <path d="M4 6h13v6H4zM23 6h7v6h-7zM8 16h6v6h4v6H4v-6h4z" fill="#fdd01e" stroke="#4a3a00" />
          <path d="M22 31V19h11" stroke="#333" strokeWidth="1.500" />
          <path d="M22 20h11" stroke="#555" strokeWidth="3" />
        </Ico>
      </button>
      <button className={cell}>
        <Ico w={34} h={34} vw={36} vh={36}>
          <SphereShape />
        </Ico>
      </button>
      <button className={cell}>
        <Ico w={35} h={33} vw={36} vh={34}>
          <ListShape />
        </Ico>
      </button>
    </div>
  );
}

function Tooltip() {
  return (
    <div className="absolute top-[13px] left-[977px] z-20 w-[538px] border border-[#adadad] bg-white px-[13px] pt-[10px] pb-[13px] text-xl leading-[30px]">
      <div className="absolute -top-[12px] left-[22px]">
        <Ico w={26} h={13}>
          <path d="M0 13L13 1l13 12" fill="#fff" stroke="#adadad" strokeWidth="1.300" />
        </Ico>
      </div>
      <p className="mb-[6px] text-lg leading-[30px] font-bold">Instant2D</p>
      <p className="whitespace-nowrap">
        Enables dynamic modification of sketches by dragging
        <br />
        dimension handles. On-screen rulers help you to
        <br />
        precisely measure modifications.
      </p>
    </div>
  );
}

function Viewport() {
  return (
    <div className="relative min-w-0 flex-1 overflow-hidden bg-[linear-gradient(to_bottom,rgba(255,255,255,0)_54%,rgba(255,255,255,.35)_59%,rgba(253,253,255,1)_70%,#ffffff_82%,#f5f6fb_100%),radial-gradient(ellipse_2500px_1020px_at_0_0,#ffffff_50%,rgba(255,255,255,.8)_68%,rgba(255,255,255,.3)_85%,rgba(255,255,255,0)_100%),radial-gradient(ellipse_800px_900px_at_100%_0,rgba(255,255,255,.55),rgba(255,255,255,0)),linear-gradient(#dfe3ec,#dfe3ec)]">
      <div className="absolute inset-0">
        <SketchCanvas />
      </div>
      <ViewToolbar />
      <WindowButtons />
      <TaskTabs />
      <Tooltip />
      <span className="absolute bottom-0 left-[12px] text-xl leading-7 font-semibold text-[#222]">*Top</span>
    </div>
  );
}

function ModelTabs() {
  return (
    <div className="flex h-[29px] shrink-0 border-t border-[#808080] text-xl">
      <div className="flex h-[24px] w-[97px] gap-px border-t-2 border-black bg-[#8d8fa8]">
        {["M9 5v12l-6-6zM3 5v12", "M9 5v12l-7-6z", "M3 5v12l7-6z", "M3 5v12l6-6zM9 5v12"].map((d) => (
          <button key={d} className="flex flex-1 items-center justify-center bg-[#a9abc0]">
            <Ico w={12} h={20}>
              <path d={d} fill="#8486a0" stroke="#8486a0" />
            </Ico>
          </button>
        ))}
      </div>
      <button className="w-[100px] border-l border-[#808080] leading-7 font-bold">Model</button>
      <button className="w-[200px] border-x border-[#808080] bg-[#d2d2d2] pr-2 leading-7">Motion Study 1</button>
    </div>
  );
}

function SwCube({ badge }) {
  return (
    <Ico w={21} h={21}>
      <path d="M1 4l8-3 8 3v10l-8 4-8-4z" fill="#c8141c" stroke="#7a0a10" />
      <path d="M6 7H3v3h3v3H3M9 7l1 6 2-4 2 4 1-6" stroke="#fff" strokeWidth="1.200" />
      {badge === "page" && (
        <>
          <rect x="11" y="11" width="9" height="9" fill="#fff" stroke="#333" />
          <path d="M13 14h5M13 17h5" stroke="#333" />
        </>
      )}
      {badge === "rx" && (
        <>
          <rect x="10" y="10" width="10" height="10" fill="#fff" stroke="#333" />
          <path d="M12 18v-6h3v3h-3M14 15l4 4M18 15l-4 4" stroke="#222" />
        </>
      )}
      {badge === "user" && (
        <>
          <rect x="6" y="7" width="8" height="12" fill="#fff" stroke="#333" />
          <path d="M7 15l2 2 3-4" stroke="#3a3" strokeWidth="1.500" />
          <circle cx="16" cy="12" r="3" fill="#999" />
          <path d="M11 20c0-7 10-7 10 0z" fill="#999" />
        </>
      )}
      {badge === "wizard" && (
        <>
          <rect width="21" height="9" fill="#f7f7f7" />
          <path d="M6 2l8 8M4 4h2M10 2h2M15 3h2" stroke="#222" strokeWidth="1.800" />
          <path d="M0 14l4-5 4 1 1 6-5 2z" fill="#3e93bf" stroke="#0c4060" />
        </>
      )}
      {badge === "globe" && (
        <>
          <circle cx="8" cy="8" r="7.500" fill="#d8ecf5" stroke="#333" />
          <path d="M3 3c4-2 6 1 4 3s-4 3-5 1M10 2c4 1 5 4 4 6z" fill={BLUE} />
          <path d="M9 11l5-2 5 2v6l-5 3-5-3z" fill="#c8141c" stroke="#7a0a10" />
        </>
      )}
    </Ico>
  );
}

const resources = [
  {
    title: "SOLIDWORKS Tools",
    links: [
      ["Property Tab Builder", <SwCube badge="page" />],
      ["SOLIDWORKS Rx", <SwCube badge="rx" />],
      ["Performance Benchmark Test", <SwCube badge="rx" />],
      [
        "Compare My Score",
        <Ico w={21} h={21}>
          <rect x="1" y="1" width="19" height="18" rx="2" fill="#3d84ab" stroke="#0c4060" />
          <path d="M4 9c3-4 9-5 12-1M17 11c-3 4-9 5-12 1" stroke="#fff" strokeWidth="1.800" />
          <circle cx="10.500" cy="10" r="2" fill="#fff" />
        </Ico>,
      ],
      ["SOLIDWORKS Settings Wizard", <SwCube badge="wizard" />],
      ["My Products", <SwCube badge="user" />],
    ],
  },
  {
    title: "Online Resources",
    links: [
      [
        "3DEXPERIENCE Marketplace",
        <Ico w={21} h={21}>
          <circle cx="10.500" cy="10.500" r="10" fill="#1f6690" stroke="#0c3f5c" />
          <path d="M3 8c3-6 12-6 15 0" stroke="#9cc8de" strokeWidth="2" />
          <path d="M9 8l5 3-5 3z" stroke="#cfe6f2" />
          <path d="M9 17h3" stroke="#cfe6f2" strokeWidth="2" />
        </Ico>,
      ],
      [
        "Partner Solutions",
        <Ico w={21} h={21}>
          <path d="M1 4l4 2 5-1 5 1 5-2v7l-4 2-5 4-5-4-5-2z" fill="#ddd" stroke="#444" strokeWidth="1.200" />
          <path d="M7 9l4-2 5 5M8 12l3 3M10 10l4 4" stroke="#444" />
        </Ico>,
      ],
    ],
  },
  {
    title: "Subscription Services",
    links: [["Subscription Services", <SwCube badge="globe" />]],
  },
];

function ResourcePane() {
  return (
    <aside className="w-[508px] shrink-0 border-l border-[#808080] text-[18px] text-[#4d4d4d]">
      <div className="flex h-[36px] items-center border-b-2 border-black bg-[#a9aaae] pr-1 pl-[15px]">
        <button>
          <Ico w={18} h={14}>
            <path d="M8 1L2 7l6 6M16 1l-6 6 6 6" stroke="#222" strokeWidth="2.200" />
          </Ico>
        </button>
        <h2 className="flex-1 pt-px pl-4 text-center text-xl font-bold text-black">SOLIDWORKS Resources</h2>
        <Ico w={28} h={28} vw={36} vh={36} className="mr-2">
          <GearShape />
        </Ico>
        <Ico w={20} h={20}>
          <PinShape fill="#222" />
        </Ico>
      </div>
      <div className="pr-[34px] pl-[20px]">
        <a href="#welcome" className="mt-[44px] flex h-[42px] items-center gap-[6px]">
          <Ico w={19} h={19} vw={37} vh={36}>
            <HomeShape />
          </Ico>
          Welcome to SOLIDWORKS
        </a>
        <div className="mt-[36px]">
          {resources.map((group) => (
            <section key={group.title} className="mb-[38px] border-t border-[#8a8a8a]">
              <div className="flex h-[25px] items-center justify-between pr-[9px] pl-[5px]">
                <h3 className="font-bold text-[#404040]">{group.title}</h3>
                <button>
                  <Ico w={13} h={8}>
                    <path d="M1 7l5.500-5.500L12 7" stroke="#666" strokeWidth="2" />
                  </Ico>
                </button>
              </div>
              {group.links.map(([label, icon]) => (
                <a key={label} href="#resources" className="flex h-[42px] items-center gap-[4px] pl-px">
                  {icon}
                  {label}
                </a>
              ))}
            </section>
          ))}
        </div>
      </div>
    </aside>
  );
}

function StatusBar() {
  return (
    <footer className="flex h-[28px] shrink-0 items-start overflow-hidden border-t border-[#808080] pt-[2px] pl-[2px] text-xl leading-[32px] whitespace-nowrap">
      <p className="flex-1">Enables dynamic modification of sketches by dragging dimension handles. On-screen rulers help you to precisely measure modif...</p>
      <p className="w-[154px]">Under Defined</p>
      <p className="w-[170px]">Editing Sketch1</p>
      <Ico w={15} h={28} vw={19} vh={36}>
        <TrafficShape />
      </Ico>
      <div className="ml-[10px] h-7 w-px bg-[#ccc]" />
      <p className="ml-[112px] w-[87px]">MMGS</p>
      <Ico w={8} h={6} className="mt-[11px]">
        <path d="M1 5h6L4 1z" fill="#333" />
      </Ico>
      <Ico w={30} h={28} className="mr-[33px] ml-[26px]">
        <path d="M1 2l12-1 16 14-1 8-8 5L1 12z" fill="#f2f2f2" stroke="#444" strokeWidth="1.500" />
        <circle cx="6" cy="6" r="2.500" stroke="#444" strokeWidth="1.300" />
        <path d="M12 12l4-5M15 15l5-6M19 18l4-6" stroke="#444" strokeWidth="1.500" />
      </Ico>
    </footer>
  );
}

export default function App() {
  return (
    <div className="flex h-screen flex-col overflow-hidden border-t-2 border-l-4 border-t-[#858585] border-l-[#1c1c1c] bg-[#f7f7f7] font-['Open_Sans','Noto_Sans',sans-serif] text-[#111]">
      <div className="h-[10px] shrink-0 bg-[#ebf0fb]" />
      <TitleBar />
      <Ribbon />
      <main className="relative flex min-h-0 flex-1">
        <CommandTabs />
        <SideTools />
        <div className="flex min-w-0 flex-1 flex-col">
          <div className="flex min-h-0 flex-1">
            <FeatureTree />
            <Viewport />
          </div>
          <ModelTabs />
        </div>
        <ResourcePane />
      </main>
      <StatusBar />
    </div>
  );
}
